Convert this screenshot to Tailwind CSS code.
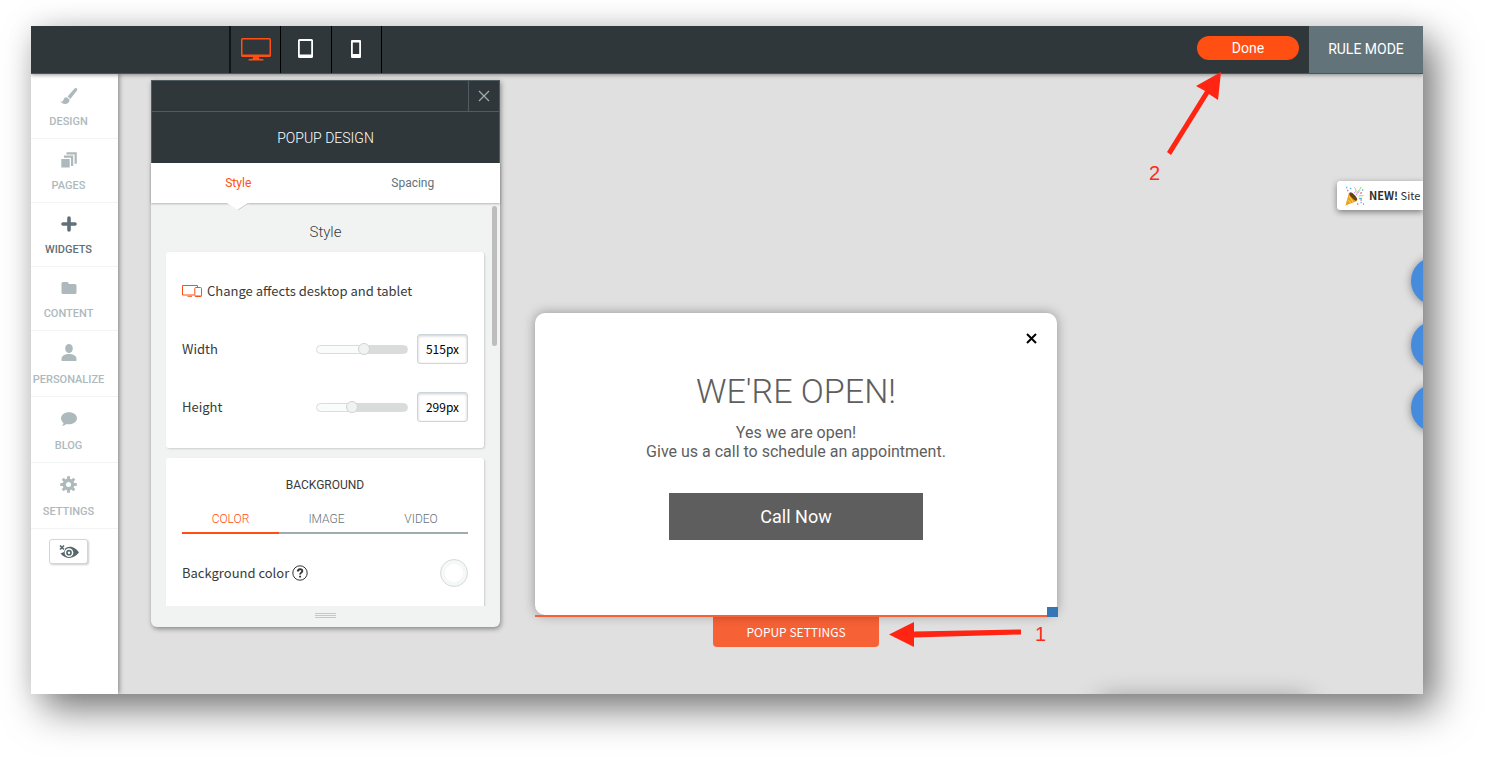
<!DOCTYPE html>
<html lang="en">
<head>
    <meta charset="UTF-8">
    <meta name="viewport" content="width=device-width, initial-scale=1.0">
    <title>Popup Design</title>
    <script src="https://cdn.jsdelivr.net/npm/@tailwindcss/browser@4"></script>
</head>
<body class="bg-white font-['Roboto',sans-serif]">
<div class="h-screen min-h-[757px] pl-[31px] pr-[62px] pt-[26px] pb-[63px] overflow-hidden">
    <div class="relative h-full flex flex-col overflow-hidden bg-[#e0e0e0] shadow-[13px_16px_36px_rgba(0,0,0,0.5),0_0_24px_rgba(0,0,0,0.1)]">

        <!-- Top bar -->
        <header class="relative z-20 h-12 shrink-0 flex items-stretch bg-[#30373a] border-b border-[#4b5659] text-white shadow-[0_1px_4px_rgba(0,0,0,0.4)]">
            <div class="ml-[198px] flex border-l-2 border-[#121516]">
                <button aria-label="Desktop" class="w-[50px] pb-[2px] flex items-center justify-center border-r border-black">
                    <svg class="w-[30px] h-6" viewBox="0 0 30 24" fill="#ff4f12"><path fill-rule="evenodd" d="M1.500 1h27a1.500 1.500 0 0 1 1.500 1.500v16a1.500 1.500 0 0 1-1.500 1.500H18v1.500l4.500.7v1.300h-15v-1.300l4.500-.7V20H1.500A1.500 1.500 0 0 1 0 18.500v-16A1.500 1.500 0 0 1 1.500 1zm0 1.500v15h27v-15z"/></svg>
                </button>
                <button aria-label="Tablet" class="w-[51px] pb-[2px] pr-px flex items-center justify-center border-r border-black">
                    <svg class="w-[15px] h-[19px]" viewBox="0 0 15 19" fill="#fff"><path fill-rule="evenodd" d="M1.500 0h12A1.500 1.500 0 0 1 15 1.500v16a1.500 1.500 0 0 1-1.500 1.500h-12A1.500 1.500 0 0 1 0 17.500v-16A1.500 1.500 0 0 1 1.500 0zM1.800 2v13.500h11.400V2z"/></svg>
                </button>
                <button aria-label="Phone" class="w-[50px] pb-[2px] pr-px flex items-center justify-center border-r border-black">
                    <svg class="w-[10px] h-[18px]" viewBox="0 0 10 18" fill="#fff"><path fill-rule="evenodd" d="M1 0h8a1 1 0 0 1 1 1v16a1 1 0 0 1-1 1H1a1 1 0 0 1-1-1V1a1 1 0 0 1 1-1zm.8 2.500v11.500h6.400V2.500z"/></svg>
                </button>
            </div>
            <button class="ml-auto mr-[10px] mt-[10px] w-[102px] h-6 rounded-full bg-[#ff4f12] text-sm leading-6">Done</button>
            <button class="w-[114px] pb-[2px] bg-[#62737a] text-sm">RULE MODE</button>
        </header>

        <div class="flex-1 flex min-h-0">
            <!-- Sidebar -->
            <nav class="relative z-10 w-[87px] shrink-0 bg-white pt-px text-[#aeb9bd] text-[11px] leading-4 font-medium text-center shadow-[1px_0_5px_rgba(0,0,0,0.45)]">
                <a href="#" class="flex flex-col items-center gap-2 h-16 pt-[11px] border-b border-[#f2f3f3] pr-3">
                    <svg class="w-5 h-5" viewBox="0 0 20 20" fill="currentColor"><path d="M17.600 2.200c.9.700.8 1.700.2 2.500l-6.500 8.200-2.700-2.300 6.700-7.800c.7-.8 1.500-1.200 2.300-.6zM7.900 11.300l2.700 2.400c-.1 2.500-1.900 4.200-4.500 4.200-1.900 0-3.600-.8-4.600-2.300 2.300.4 2.500-.8 3.200-2.300.6-1.400 1.800-2 3.200-2z"/></svg>
                    DESIGN
                </a>
                <a href="#" class="flex flex-col items-center gap-2 h-16 pt-[11px] border-b border-[#f2f3f3] pr-3">
                    <svg class="w-5 h-5" viewBox="0 0 20 20" fill="currentColor"><path d="M2.300 9h8.400v8.600H2.300zM5 5.600h9.200V16H12V7.800H5zM7.500 2.200h10.300v11.600h-2.200V4.400H7.500z"/></svg>
                    PAGES
                </a>
                <a href="#" class="flex flex-col items-center gap-2 h-16 pt-[11px] border-b border-[#f2f3f3] pr-3 text-[#5f7077]">
                    <svg class="w-5 h-5" viewBox="0 0 20 20" fill="none" stroke="currentColor" stroke-width="3.600" stroke-linecap="round"><path d="M10 4v12M4 10h12"/></svg>
                    WIDGETS
                </a>
                <a href="#" class="flex flex-col items-center gap-2 h-16 pt-[11px] border-b border-[#f2f3f3] pr-3">
                    <svg class="w-5 h-5" viewBox="0 0 20 20" fill="currentColor"><path d="M4 4h4.500l1.500 2h6a1.500 1.500 0 0 1 1.500 1.500v7a1.500 1.500 0 0 1-1.500 1.500H4a1.500 1.500 0 0 1-1.500-1.500v-9A1.500 1.500 0 0 1 4 4z"/></svg>
                    CONTENT
                </a>
                <a href="#" class="flex flex-col items-center gap-[9px] h-[66px] pt-3 border-b border-[#f2f3f3] pr-3">
                    <svg class="w-5 h-5" viewBox="0 0 20 20" fill="currentColor"><ellipse cx="10" cy="5.500" rx="3.800" ry="4.600"/><path d="M2.500 17.500V16c0-3.400 3.500-5 7.500-5s7.500 1.600 7.500 5v1.500q0 .5-1 .5h-13q-1 0-1-.5z"/></svg>
                    PERSONALIZE
                </a>
                <a href="#" class="flex flex-col items-center gap-[9px] h-[66px] pt-3 border-b border-[#f2f3f3] pr-3">
                    <svg class="w-5 h-5" viewBox="0 0 20 20" fill="currentColor"><path d="M10 3.300c4.400 0 8 2.600 8 6s-3.600 6-8 6c-1 0-1.800-.1-2.600-.3-1.300 1.100-2.700 1.800-4.400 1.800.9-.9 1.300-1.800 1.500-2.900C3 12.800 2 11.100 2 9.300c0-3.400 3.600-6 8-6z"/></svg>
                    BLOG
                </a>
                <a href="#" class="flex flex-col items-center gap-[9px] h-[66px] pt-3 border-b border-[#f2f3f3] pr-3">
                    <svg class="w-5 h-5" viewBox="0 0 20 20" fill="none" stroke="currentColor"><circle cx="9.500" cy="9.500" r="4.200" stroke-width="3.400"/><path stroke-width="3" d="M9.500 1.300v3M9.500 14.700v3M1.300 9.500h3M14.700 9.500h3M3.700 3.700l2 2M13.300 13.300l2 2M3.700 15.300l2-2M13.300 5.700l2-2"/></svg>
                    SETTINGS
                </a>
                <div class="flex justify-center pt-[10px] pr-3">
                    <button aria-label="Hide preview" class="w-[39px] h-[25px] flex items-center justify-center rounded-[3px] border border-[#cfd8db] bg-white text-[#56666d] shadow-[1px_1px_2px_rgba(0,0,0,0.2)]">
                        <svg class="w-5 h-4" viewBox="0 0 20 16" fill="none" stroke="currentColor"><path fill="currentColor" stroke="none" d="M6.500 4C12 .8 17 4 20 8.500 15 15 7 16 1.500 9.500L5 8z"/><circle cx="10" cy="8.700" r="3.600" fill="#56666d" stroke="#fff" stroke-width="1.500"/><circle cx="10" cy="8.700" r="1.200" fill="#fff" stroke="none"/><path stroke-width="1.600" d="M1 1.500l4 4M5 1.500l-4 4"/></svg>
                    </button>
                </div>
            </nav>

            <!-- Editing canvas -->
            <main class="relative flex-1 min-w-0">

                <!-- Popup design window -->
                <section class="absolute left-[33px] top-[6px] w-[349px] rounded-b-md bg-[#f1f3f3] shadow-[1px_2px_5px_rgba(0,0,0,0.4)]">
                    <div class="h-8 flex justify-end bg-[#30373a] border border-[#4f5c61]">
                        <button aria-label="Close" class="w-[31px] flex items-center justify-center border-l border-[#4f5c61]">
                            <svg class="w-3 h-3" viewBox="0 0 12 12" stroke="#a3adb0" stroke-width="1.200"><path d="M1 1l10 10M11 1L1 11"/></svg>
                        </button>
                    </div>
                    <h2 class="h-[51px] leading-[52px] bg-[#30373a] text-center text-sm font-light text-white border-x border-[#4f5c61]">POPUP DESIGN</h2>
                    <div class="relative grid grid-cols-2 h-10 bg-white text-xs shadow-[0_1px_2px_rgba(0,0,0,0.25)]">
                        <button class="relative text-[#ff4f12]">Style
                            <svg class="absolute left-1/2 -translate-x-1/2 top-full w-[22px] h-[9px]" viewBox="0 0 22 9"><path fill="#fff" d="M0 0h22L11 7z"/><path fill="none" stroke="#c5c9c9" d="M11 7L21.500 0"/></svg>
                        </button>
                        <button class="text-[#62737a]">Spacing</button>
                    </div>

                    <div class="relative h-[403px] overflow-hidden px-[15px] font-['Noto_Sans_CJK_SC',sans-serif] text-[13px] text-[#3a3a3a]">
                        <div class="absolute right-[3px] top-[3px] w-[5px] h-[140px] rounded-full bg-[#bdbdbd]"></div>
                        <h3 class="h-[49px] pt-[17px] text-center font-['Roboto',sans-serif] text-[15px] leading-6 font-light text-[#3a3a3a]">Style</h3>

                        <div class="h-[196px] rounded-[3px] bg-white px-4 pt-6 mr-px shadow-[1px_1px_2px_rgba(0,0,0,0.15)]">
                            <p class="flex items-center gap-[5px] h-[30px]">
                                <svg class="w-5 h-3" viewBox="0 0 20 12" fill="none" stroke="#ff4f12"><path d="M12 10H.5V.5h15V2M5.500 11.300h4.500"/><rect x="12.800" y="2.500" width="6.700" height="9" rx="1"/><path d="M13 11h6.500"/></svg>
                                Change affects desktop and tablet
                            </p>
                            <div class="flex items-center h-[30px] mt-7">
                                <label for="width" class="flex-1">Width</label>
                                <input id="width" type="range" min="0" max="100" value="52" class="w-[92px] h-[9px] mr-[9px] appearance-none rounded-full border border-[#d5dddf] bg-[linear-gradient(to_right,#fafbfb_52%,#dadbdb_52%)] [&::-webkit-slider-thumb]:appearance-none [&::-webkit-slider-thumb]:w-3 [&::-webkit-slider-thumb]:h-3 [&::-webkit-slider-thumb]:rounded-full [&::-webkit-slider-thumb]:border [&::-webkit-slider-thumb]:border-[#cdd4d6] [&::-webkit-slider-thumb]:bg-[#f1f3f3]">
                                <input type="text" value="515px" aria-label="Width value" class="w-[51px] h-[30px] pb-px rounded-[3px] border border-[#ccd5d7] bg-white text-center text-xs text-black shadow-[inset_0_1px_3px_rgba(0,0,0,0.2)]">
                            </div>
                            <div class="flex items-center h-[30px] mt-7">
                                <label for="height" class="flex-1">Height</label>
                                <input id="height" type="range" min="0" max="100" value="37" class="w-[92px] h-[9px] mr-[9px] appearance-none rounded-full border border-[#d5dddf] bg-[linear-gradient(to_right,#fafbfb_38%,#dadbdb_38%)] [&::-webkit-slider-thumb]:appearance-none [&::-webkit-slider-thumb]:w-3 [&::-webkit-slider-thumb]:h-3 [&::-webkit-slider-thumb]:rounded-full [&::-webkit-slider-thumb]:border [&::-webkit-slider-thumb]:border-[#cdd4d6] [&::-webkit-slider-thumb]:bg-[#f1f3f3]">
                                <input type="text" value="299px" aria-label="Height value" class="w-[51px] h-[30px] pb-px rounded-[3px] border border-[#ccd5d7] bg-white text-center text-xs text-black shadow-[inset_0_1px_3px_rgba(0,0,0,0.2)]">
                            </div>
                        </div>

                        <div class="h-40 mt-[10px] mr-px rounded-[3px] bg-white px-4 pt-[18px] shadow-[1px_1px_2px_rgba(0,0,0,0.15)]">
                            <h4 class="text-center font-['Roboto',sans-serif] text-xs leading-[18px]">BACKGROUND</h4>
                            <div class="grid grid-cols-[97px_95px_1fr] mt-3 font-['Roboto',sans-serif] text-xs leading-[26px] font-light">
                                <button class="border-b-2 border-[#ff4f12] text-[#ff4f12]">COLOR</button>
                                <button class="border-b-2 border-[#9eabaf] text-[#62737a]">IMAGE</button>
                                <button class="border-b-2 border-[#9eabaf] text-[#62737a]">VIDEO</button>
                            </div>
                            <div class="flex items-center mt-[25px]">
                                <label for="bg" class="mr-[3px]">Background color</label>
                                <svg class="w-4 h-4" viewBox="0 0 16 16" fill="none" stroke="#333"><circle cx="8" cy="8" r="7.200"/><path stroke-width="1.900" d="M5.800 6.500c0-3 4.500-3 4.500-.5 0 1.600-2.200 1.700-2.200 3.500M8.100 10.800v1.600"/></svg>
                                <button id="bg" aria-label="Pick color" class="ml-auto w-7 h-7 rounded-full border border-[#d3dbdc] bg-[#f6f7f7] p-1"><span class="block w-full h-full rounded-full bg-white"></span></button>
                            </div>
                        </div>
                    </div>

                    <div class="h-[21px] flex flex-col items-center gap-px pt-[7px]">
                        <span class="w-[21px] h-px bg-[#c4c8c8]"></span>
                        <span class="w-[21px] h-px bg-[#c4c8c8]"></span>
                        <span class="w-[21px] h-px bg-[#c4c8c8]"></span>
                    </div>
                </section>

                <!-- Popup being edited -->
                <section class="absolute left-[417px] top-[239px] w-[522px] text-center text-[#5e5e5e]">
                    <div class="relative h-[302px] rounded-[10px] bg-white pt-[58px] shadow-[0_0_12px_rgba(0,0,0,0.35)]">
                        <button aria-label="Close popup" class="absolute right-5 top-5">
                            <svg class="w-[11px] h-[11px]" viewBox="0 0 11 11" stroke="#000" stroke-width="2"><path d="M1 1l9 9M10 1L1 10"/></svg>
                        </button>
                        <h1 class="text-[34px] leading-10 font-light">WE'RE OPEN!</h1>
                        <p class="mt-3 text-base leading-[19px]">Yes we are open!<br>Give us a call to schedule an appointment.</p>
                        <a href="#" class="block mx-auto mt-8 w-[254px] h-[47px] bg-[#5e5e5e] text-white text-lg leading-[47px]">Call Now</a>
                    </div>
                    <div class="relative h-[2px] bg-[#f76136]">
                        <span class="absolute right-[-1px] bottom-0 w-[11px] h-[10px] bg-[#3577b5]"></span>
                    </div>
                    <button class="block mx-auto w-[166px] h-[30px] pb-px rounded-b bg-[#f76136] text-white text-xs font-['Noto_Sans_CJK_SC',sans-serif]">POPUP SETTINGS</button>
                </section>

                <!-- Site notice and floating buttons at the right edge -->
                <div class="absolute right-0 top-[107px] w-[86px] h-[29px] flex items-center gap-1 rounded-l-[3px] bg-white pl-2 text-[11px] text-[#2d2d2d] font-['Noto_Sans_CJK_SC',sans-serif] whitespace-nowrap shadow-[0_2px_6px_rgba(0,0,0,0.45)]">
                    <svg class="w-5 h-5 shrink-0" viewBox="0 0 20 20" fill="none">
                        <path fill="#e9a21c" d="M4 6.500C8.500 8 11.500 11.500 12 15L0.500 19.500z"/>
                        <path stroke="#ffd25a" d="M4 10l4 6M3 13.500l3 4"/>
                        <ellipse cx="8.300" cy="10.500" rx="2" ry="5.200" transform="rotate(-42 8.300 10.500)" fill="#68401c"/>
                        <path stroke="#d98bff" d="M9 7c3-1 2-4 .5-5.500M11 9.500c1-3 3-3 4-5"/>
                        <path stroke="#8fe04a" d="M12 7c0-3 3-2 4-6M13.500 10.500c2-2 3 0 5-1"/>
                        <path stroke="#ff5d6c" stroke-width="1.300" d="M2 4.500h1.300M15 7.500l2-1M15.500 14h1.300M12 18h1.300M18 18h1"/>
                        <path stroke="#46c3f0" stroke-width="1.300" d="M1 1.500h1.300M5 2l1.300 1M17 4h1.300M14 12.500h3M15.500 16.500h1.300"/>
                    </svg>
                    <p><b>NEW!</b> Site</p>
                </div>
                <button aria-label="Support" class="absolute right-[-36px] top-[183px] w-12 h-12 rounded-full bg-[#468bdc] shadow-[0_1px_9px_rgba(0,0,0,0.4)]"></button>
                <button aria-label="Comments" class="absolute right-[-36px] top-[247px] w-12 h-12 rounded-full bg-[#468bdc] shadow-[0_1px_9px_rgba(0,0,0,0.4)]"></button>
                <button aria-label="Help" class="absolute right-[-36px] top-[310px] w-12 h-12 rounded-full bg-[#468bdc] shadow-[0_1px_9px_rgba(0,0,0,0.4)]"></button>
                <div class="absolute right-[115px] -bottom-6 w-[208px] h-5 shadow-[0_0_24px_rgba(0,0,0,0.35)]"></div>
            </main>
        </div>

        <!-- Step markers -->
        <div class="absolute z-30 left-[858px] top-[594px] flex items-center gap-[14px] text-[#ff2a1a] text-xl font-['Liberation_Sans',sans-serif]">
            <svg class="w-[132px] h-[28px]" viewBox="0 0 132 28" fill="#ff2512"><path d="M0 14.500L25 2v9.500L132 9.500v5L25 17.500V27z"/></svg>
            <span>1</span>
        </div>
        <div class="absolute z-30 right-[200px] top-[46px] w-[74px] text-[#ff2a1a] text-xl font-['Liberation_Sans',sans-serif]">
            <svg class="ml-4 w-[58px] h-[84px]" viewBox="0 0 58 84" fill="#ff2512"><path d="M56 0L53 28l-9-6L6 83l-4-3L40 19l-9-5z"/></svg>
            <span class="block leading-[34px]">2</span>
        </div>
    </div>
</div>
</body>
</html>
